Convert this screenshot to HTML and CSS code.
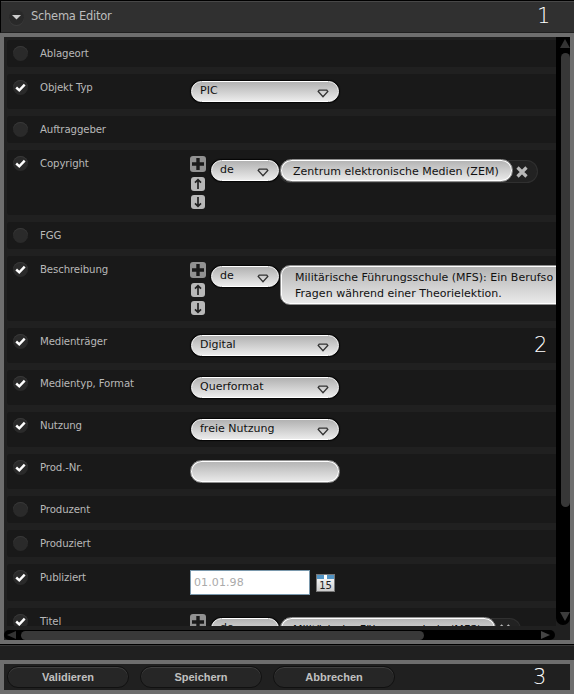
FILE: index.html
```html
<!DOCTYPE html>
<html lang="de">
<head>
<meta charset="utf-8">
<title>Schema Editor</title>
<link rel="stylesheet" href="styles.css">
</head>
<body>
<svg class="defs" aria-hidden="true">
  <symbol id="arrow" viewBox="0 0 12 9"><path d="M1.2 2.5 L2.2 1.2 H9.8 L10.8 2.5 L6 7.8 Z" fill="none" stroke="#333" stroke-width="1.3"/></symbol>
  <symbol id="check" viewBox="0 0 15 15"><path d="M3.2 7.5 L6.3 10.4 L11.7 4.7" fill="none" stroke="#fff" stroke-width="2.4"/></symbol>
  <symbol id="plus" viewBox="0 0 16 16"><rect width="16" height="16" rx="3" fill="#929292"/><path d="M8 2V14M2 8H14" stroke="#1a1a1a" stroke-width="3.4"/></symbol>
  <symbol id="up" viewBox="0 0 14 14"><rect width="14" height="14" rx="3" fill="#b8b8b8"/><path d="M7 12V3M4 5.7L7 2.7L10 5.7" fill="none" stroke="#222" stroke-width="1.7"/></symbol>
  <symbol id="down" viewBox="0 0 14 14"><rect width="14" height="14" rx="3" fill="#b8b8b8"/><path d="M7 2V11M4 8.3L7 11.3L10 8.3" fill="none" stroke="#222" stroke-width="1.7"/></symbol>
  <symbol id="cross" viewBox="0 0 12 12"><path d="M1.5 1.5L10.5 10.5M10.5 1.5L1.5 10.5" stroke="#b9b9b9" stroke-width="3.2"/></symbol>
</svg>
<div class="app">
  <header class="header">
    <span class="toggle"><svg width="9" height="5"><path d="M0 0H9L4.5 4.5Z" fill="#ccc"/></svg></span>
    <h1 class="title">Schema Editor</h1>
    <span class="num">1</span>
  </header>
  <main class="panel">
    <div class="upper">
      <div class="list">
        <div class="row"><i class="box"></i><span class="label">Ablageort</span></div>
        <div class="row mid"><i class="box"><svg><use href="#check"/></svg></i><span class="label">Objekt Typ</span><div class="select"><span>PIC</span><svg><use href="#arrow"/></svg></div></div>
        <div class="row"><i class="box"></i><span class="label">Auftraggeber</span></div>
        <div class="row tall"><i class="box"><svg><use href="#check"/></svg></i><span class="label">Copyright</span>
          <div class="tools"><svg class="plus"><use href="#plus"/></svg><svg><use href="#up"/></svg><svg><use href="#down"/></svg></div>
          <div class="select lang"><span>de</span><svg><use href="#arrow"/></svg></div>
          <div class="tag"><div class="field">Zentrum elektronische Medien (ZEM)</div><svg><use href="#cross"/></svg></div>
        </div>
        <div class="row"><i class="box"></i><span class="label">FGG</span></div>
        <div class="row tall"><i class="box"><svg><use href="#check"/></svg></i><span class="label">Beschreibung</span>
          <div class="tools"><svg class="plus"><use href="#plus"/></svg><svg><use href="#up"/></svg><svg><use href="#down"/></svg></div>
          <div class="select lang"><span>de</span><svg><use href="#arrow"/></svg></div>
          <div class="area">Militärische Führungsschule (MFS): Ein Berufso<br>Fragen während einer Theorielektion.</div>
        </div>
        <div class="row mid"><i class="box"><svg><use href="#check"/></svg></i><span class="label">Medienträger</span><div class="select"><span>Digital</span><svg><use href="#arrow"/></svg></div><span class="num two">2</span></div>
        <div class="row mid"><i class="box"><svg><use href="#check"/></svg></i><span class="label">Medientyp, Format</span><div class="select"><span>Querformat</span><svg><use href="#arrow"/></svg></div></div>
        <div class="row mid"><i class="box"><svg><use href="#check"/></svg></i><span class="label">Nutzung</span><div class="select"><span>freie Nutzung</span><svg><use href="#arrow"/></svg></div></div>
        <div class="row mid"><i class="box"><svg><use href="#check"/></svg></i><span class="label">Prod.-Nr.</span><div class="field empty"></div></div>
        <div class="row"><i class="box"></i><span class="label">Produzent</span></div>
        <div class="row"><i class="box"></i><span class="label">Produziert</span></div>
        <div class="row date-row"><i class="box"><svg><use href="#check"/></svg></i><span class="label">Publiziert</span><div class="date">01.01.98</div><div class="cal"><i></i><b>15</b></div></div>
        <div class="row tall"><i class="box"><svg><use href="#check"/></svg></i><span class="label">Titel</span>
          <div class="tools"><svg class="plus"><use href="#plus"/></svg><svg><use href="#up"/></svg><svg><use href="#down"/></svg></div>
          <div class="select lang"><span>de</span><svg><use href="#arrow"/></svg></div>
          <div class="tag short"><div class="field">Militärische Führungsschule (MFS)</div><svg><use href="#cross"/></svg></div>
        </div>
      </div>
      <div class="vbar"><svg width="10" height="9"><path d="M5 0L10 9H0Z" fill="#333"/></svg><i></i><svg width="10" height="9"><path d="M0 0H10L5 9Z" fill="#3c3c3c"/></svg></div>
    </div>
    <div class="hbar"><svg width="9" height="8"><path d="M9 0V8L0 4Z" fill="#333"/></svg><i></i><svg width="9" height="8"><path d="M0 0L9 4L0 8Z" fill="#444"/></svg></div>
  </main>
  <div class="gap"></div>
  <footer class="footer">
    <button class="btn">Validieren</button>
    <button class="btn">Speichern</button>
    <button class="btn">Abbrechen</button>
    <span class="num three">3</span>
  </footer>
</div>
</body>
</html>
```
FILE: styles.css
```css
* { box-sizing: border-box; }
body { margin: 0; background: #202020; font-family: "DejaVu Sans", Verdana, sans-serif; }
.defs { position: absolute; width: 0; height: 0; }
.app { width: 574px; height: 694px; overflow: hidden; display: flex; flex-direction: column; }
svg { display: block; flex: none; }

.header { height: 33px; flex: none; display: flex; background: #303030; border: 1px solid #000; border-right: 0; border-bottom-color: #202020; box-shadow: inset 0 1px #484848; }
.toggle { width: 15px; height: 15px; margin: 9px 0 0 8px; border-radius: 50%; background: #292929; box-shadow: 0 1px #3c3c3c; padding: 5px 0 0 3px; }
.title { margin: 6px 0 0 7px; font-size: 11.5px; font-weight: 400; line-height: 18px; width: 100px; color: #bdbdbd; white-space: nowrap; letter-spacing: -.27px; }
.num { margin: 3px 22px 0 auto; width: 15px; font-weight: 200; font-size: 21px; line-height: 25px; color: #fff; }

.panel { height: 611px; flex: none; border: 4px solid #6e6e6e; background: #202020; }
.upper { height: 589px; display: flex; }
.list { width: 552px; height: 589px; overflow: hidden; padding: 3px 0 0 3px; display: flex; flex-direction: column; gap: 7px; }
.row { width: 549px; height: 27px; flex: none; display: flex; align-items: flex-start; background: #191919; border-radius: 3px 0 0 3px; padding-left: 6px; }
.mid { height: 35px; }
.tall { height: 65px; }
.date-row { height: 37px; }
.box { width: 15px; height: 15px; flex: none; margin: 6px 12px 0 0; border-radius: 50%; background: #2a2a2a; box-shadow: inset 0 1px #383838; }
.box svg { width: 15px; height: 15px; }
.label { width: 150px; flex: none; margin-top: 6px; font-size: 10.2px; line-height: 15px; letter-spacing: -.12px; color: #b8b8b8; white-space: nowrap; }

.select { width: 148px; height: 21px; flex: none; margin: 7px 0 0 1px; border: 1px solid #fff; border-radius: 11px; background: linear-gradient(#b2b2b2, #ebebeb); display: flex; justify-content: space-between; padding: 0 9px 0 8px; box-shadow: 0 0 1px 1px #050505; }
.select span { font-size: 11px; line-height: 17px; color: #111; white-space: nowrap; }
.select svg { width: 12px; height: 9px; margin-top: 7px; }
.tools { width: 16px; flex: none; padding-top: 6px; display: flex; flex-direction: column; align-items: center; gap: 4px; }
.tools svg { width: 14px; height: 14px; }
.tools .plus { width: 16px; height: 16px; margin-bottom: 1px; }
.lang { width: 68px; margin: 10px 0 0 5px; }
.tag { width: 257px; height: 21px; flex: none; margin: 11px 0 0 1px; border-radius: 11px; background: #222; box-shadow: 0 0 0 1px #303030; display: flex; }
.tag svg { width: 12px; height: 12px; margin: 5px 0 0 3px; }
.field { width: 233px; height: 23px; flex: none; margin-top: -2px; border: 1px solid #8f8f8f; border-radius: 12px; background: linear-gradient(#b2b2b2, #ebebeb); box-shadow: inset 0 0 0 1px #fff; padding-left: 12px; font-size: 11px; line-height: 23px; letter-spacing: .03px; color: #111; white-space: nowrap; }
.short { width: 240px; }
.short .field { width: 216px; }
.empty { width: 150px; margin: 6px 0 0; }
.area { width: 330px; height: 40px; flex: none; margin: 9px 0 0 1px; border: 1px solid #8f8f8f; border-radius: 10px; background: linear-gradient(#b2b2b2, #ebebeb); box-shadow: inset 0 0 0 1px #fff; padding: 4px 0 0 14px; font-size: 11px; line-height: 16px; letter-spacing: .02px; color: #111; white-space: nowrap; }
.date { width: 120px; height: 25px; margin-top: 6px; border: 1px solid #7a98ac; background: #fff; padding-left: 3px; font-size: 11px; line-height: 23px; letter-spacing: .1px; color: #aaa; }
.cal { width: 19px; height: 18px; margin: 10px 0 0 6px; border: 1px solid #777; background: linear-gradient(#fff, #ccc); display: flex; flex-direction: column; align-items: center; }
.cal i { width: 17px; height: 4px; background: linear-gradient(90deg, #5294c4 7px, #fff 7px 10px, #5294c4 10px); flex: none; }
.cal b { font-size: 10px; line-height: 13px; color: #222; font-weight: 400; }

.two { margin: 5px 7px 0 auto; }
.vbar { width: 14px; height: 588px; background: #000; border-radius: 0 0 7px 7px; display: flex; flex-direction: column; padding: 2px 0 4px 4px; }
.vbar i { width: 9px; height: 454px; margin: 5px 0 auto 1px; border-radius: 5px; background: #373737; }
.hbar { width: 551px; height: 10px; margin-top: 4px; border-radius: 5px; background: #000; display: flex; align-items: center; padding: 0 5px 0 3px; }
.hbar i { width: 403px; height: 9px; margin: 0 auto 0 5px; border-radius: 5px; background: #393939; }

.gap { height: 16px; flex: none; border-top: 1px solid #000; box-shadow: inset 0 1px #383838; }
.footer { height: 34px; flex: none; border: 4px solid #6e6e6e; background: #202020; display: flex; gap: 11px; padding: 2px 0 0 3px; }
.btn { width: 122px; height: 22px; flex: none; border: 1px solid #111; border-radius: 11px; background: #262626; box-shadow: inset 0 1px #404040; font: bold 11px/18px "Liberation Sans", Arial, sans-serif; color: #c0c0c0; padding: 0 0 1px; }
.three { margin: -1px 22px 0 auto; }
```
